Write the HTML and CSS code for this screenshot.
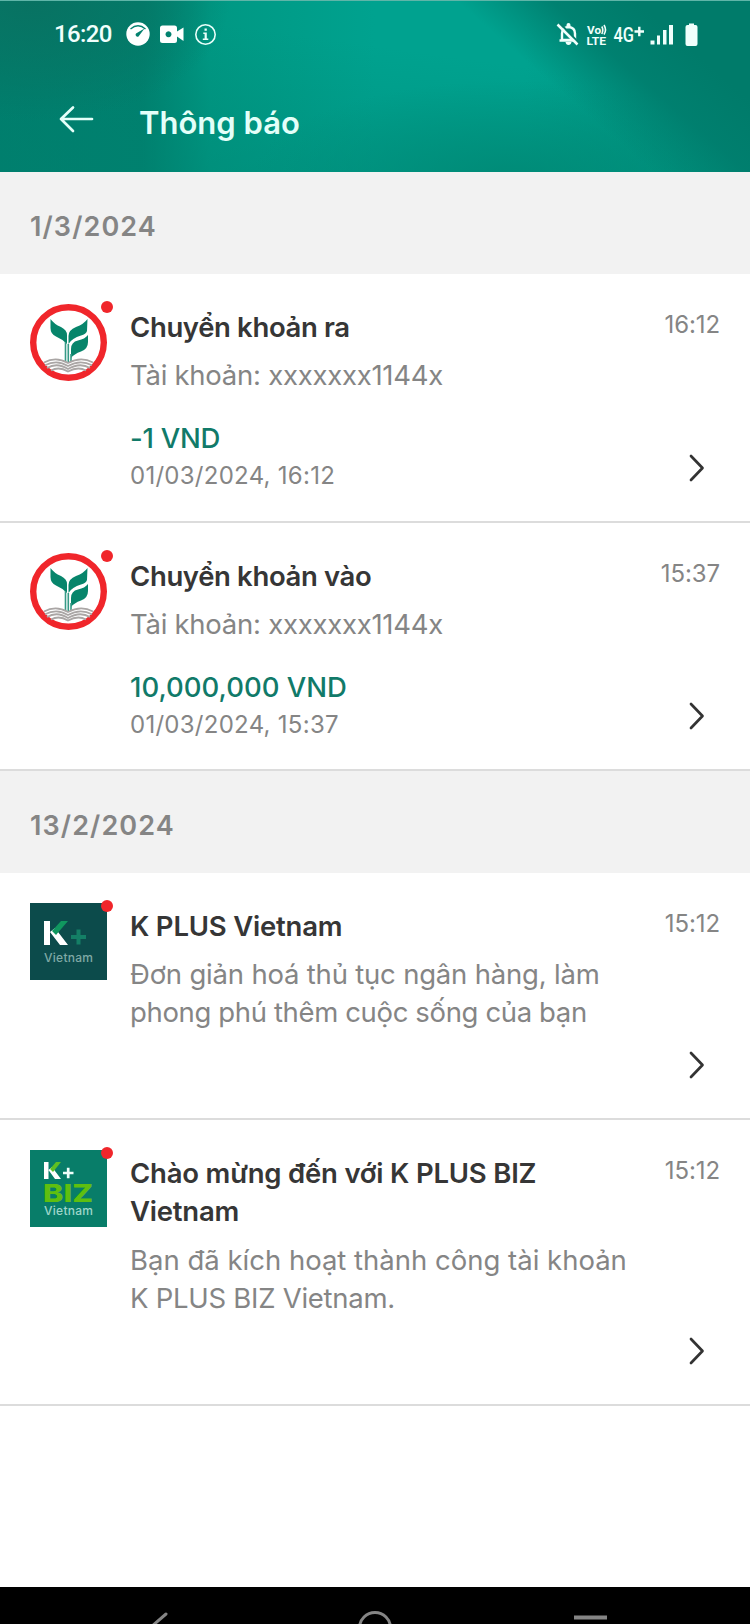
FILE: index.html
```html
<!DOCTYPE html>
<html lang="vi">
<head>
<meta charset="utf-8">
<title>Thông báo</title>
<link rel="stylesheet" href="styles.css">
</head>
<body>
<svg class="defs" width="0" height="0" aria-hidden="true">
  <symbol id="leaf" viewBox="0 0 77 77">
    <circle cx="38.500" cy="38.500" r="35.300" fill="#fff" stroke="#f0262b" stroke-width="6.400"/>
    <path d="M20.500 15Q24 20 31 23Q37 26 37 31V40Q32 35 26 32.500Q20.500 30 20.500 24Z" fill="#07856b"/>
    <path d="M57.500 15Q54 20 46 23Q38.500 26 38.500 32V40Q42 34 51 31.500Q56 30 57 27Z" fill="#07856b"/>
    <path d="M58 31Q55 35 48 36.500Q41 38 41 45V54Q44 50 51 47.500Q58 45 58 38Z" fill="#07856b"/>
    <path d="M35.500 38V58M38.300 40V58M41 50V57" fill="none" stroke="#369b87" stroke-width="1.600"/>
    <g fill="none" stroke="#aaa6a5" stroke-width="1.800">
      <path d="M14 58.500Q26 52 38 59Q51 52 63 58.500"/>
      <path d="M15 61.200Q27 55 38 62Q50 55 62 61.200"/>
      <path d="M17 64Q27 58 38 65Q50 58 60 64"/>
      <path d="M21 66.500Q29 62 38 67.500Q48 62 56 66.500"/>
    </g>
  </symbol>
  <symbol id="chevron" viewBox="0 0 18 30">
    <path d="M3 3 14.500 15 3 27" fill="none" stroke="#333" stroke-width="2.700" stroke-linecap="round" stroke-linejoin="round"/>
  </symbol>
</svg>
<header class="header">
  <div class="status">
    <span class="clock">16:20</span>
    <svg class="status-left" width="98" height="26" viewBox="0 0 98 26" fill="#fff">
      <circle cx="13" cy="13" r="11.700"/>
      <path d="M5.500 8Q13 1.500 20.500 8" fill="none" stroke="#04816f" stroke-width="1.300"/>
      <path d="M19.500 7.500 11 12.500a2 2 0 0 0 2.500 3Z" fill="#04816f"/>
      <path fill-rule="evenodd" d="M37.500 4.500H49.500Q52 4.500 52 7V10.500L58.500 6.500V20L52 15.500V19.500Q52 22 49.500 22H37.500Q35 22 35 19.500V7Q35 4.500 37.500 4.500ZM43.500 10.200a3 3 0 1 0 .01 0Z"/>
      <circle cx="80.500" cy="13.500" r="9.700" fill="none" stroke="#e8fffa" stroke-width="1.600"/>
      <path d="M79.500 7.500h2.300v2.200h-2.300zM78.300 11.500h3.500v6h1.500v1.400h-5.500v-1.400h1.800v-4.600h-1.300z" fill="#e8fffa"/>
    </svg>
    <svg class="status-right" width="144" height="28" viewBox="0 0 144 28" fill="#f0fffc">
      <path d="M7 20V13.500Q7 7.500 13.500 7Q20 7.500 20 13.500V20ZM4.500 20.500H22" fill="none" stroke="#f0fffc" stroke-width="2.400"/>
      <path d="M13.500 3a2 2 0 0 1 2 2v2h-4v-2a2 2 0 0 1 2-2M10.500 22h6q-.5 3-3 3t-3-3"/>
      <path d="M4.500 3 24 23" stroke="#057d6c" stroke-width="2"/>
      <path d="M2.500 4.500 22.500 24.500" stroke="#f0fffc" stroke-width="2.500"/>
      <text class="volte" x="32" y="14" textLength="14" lengthAdjust="spacingAndGlyphs">Vo</text>
      <path d="M46.800 6.500q2 3.500 0 7.500M49 5q3 5 0 9.500" fill="none" stroke="#f0fffc" stroke-width="1.600"/>
      <text class="volte" x="31.500" y="24.500" textLength="19.500" lengthAdjust="spacingAndGlyphs">LTE</text>
      <text class="network" x="58.500" y="22" textLength="20.500" lengthAdjust="spacingAndGlyphs">4G</text>
      <path d="M79.500 11.500h9.500M84.300 6.700v9.500" stroke="#f0fffc" stroke-width="2.400"/>
      <path d="M95.500 20.500h4v4h-4zM102 15.500h3v9h-3zM108 10h3.500v14.500H108zM114 5h4v19.500h-4z"/>
      <path d="M134 3.500h5v1.500h1.500q2 0 2 2V24q0 2-2 2h-8q-2 0-2-2V7q0-2 2-2h1.500z"/>
    </svg>
  </div>
  <div class="titlebar">
    <svg class="back" width="36" height="28" viewBox="0 0 36 28" fill="none" stroke="#e4fff9" stroke-width="2.700" stroke-linecap="round" stroke-linejoin="round"><path d="M33 14H2M14 2.500 2 14 14 26"/></svg>
    <h1 class="title">Thông báo</h1>
  </div>
</header>
<main class="feed">
  <h2 class="day">1/3/2024</h2>
  <article class="item item-first">
    <div class="avatar"><svg class="logo"><use href="#leaf"/></svg><i class="dot"></i></div>
    <div class="body">
      <h3 class="name tight">Chuyển khoản ra</h3>
      <p class="text snug">Tài khoản: xxxxxxx1144x</p>
      <p class="amount snug">-1 VND</p>
      <p class="stamp">01/03/2024, 16:12</p>
    </div>
    <div class="side"><time class="time">16:12</time><svg class="chevron"><use href="#chevron"/></svg></div>
  </article>
  <article class="item item-second">
    <div class="avatar"><svg class="logo"><use href="#leaf"/></svg><i class="dot"></i></div>
    <div class="body">
      <h3 class="name tight">Chuyển khoản vào</h3>
      <p class="text snug">Tài khoản: xxxxxxx1144x</p>
      <p class="amount">10,000,000 VND</p>
      <p class="stamp">01/03/2024, 15:37</p>
    </div>
    <div class="side"><time class="time">15:37</time><svg class="chevron"><use href="#chevron"/></svg></div>
  </article>
  <h2 class="day">13/2/2024</h2>
  <article class="item item-third">
    <div class="avatar">
      <svg class="logo" viewBox="0 0 77 77">
        <rect width="77" height="77" fill="#0c4b4b"/>
        <path d="M14 18h6v24h-6zM20 29 25 25 38 42H30Z" fill="#fff"/>
        <path d="M22 28 31 18H38L26 32Z" fill="#10975f"/>
        <path d="M41 34H56M48.500 26.500V41.500" stroke="#147f66" stroke-width="4"/>
        <text class="brand brand-dark" x="14" y="59" textLength="49">Vietnam</text>
      </svg><i class="dot"></i></div>
    <div class="body">
      <h3 class="name light">K PLUS Vietnam</h3>
      <p class="text"><span class="light">Đơn giản hoá thủ tục ngân hàng, làm</span><br><span class="tight">phong phú thêm cuộc sống của bạn</span></p>
    </div>
    <div class="side"><time class="time">15:12</time><svg class="chevron"><use href="#chevron"/></svg></div>
  </article>
  <article class="item item-fourth">
    <div class="avatar">
      <svg class="logo" viewBox="0 0 77 77">
        <rect width="77" height="77" fill="#087d69"/>
        <path d="M14 12h4.500v17h-4.500zM18.500 20 22 17 31 29H25Z" fill="#fff"/>
        <path d="M20 19 26 12H31L23 22Z" fill="#5fbf22"/>
        <path d="M33 23H43.500M38.200 17.700V28.300" stroke="#f0fffb" stroke-width="2.700"/>
        <text class="biz" x="13" y="51.500" textLength="50" lengthAdjust="spacingAndGlyphs">BIZ</text>
        <text class="brand brand-light" x="14" y="65" textLength="49">Vietnam</text>
      </svg><i class="dot"></i></div>
    <div class="body">
      <h3 class="name light">Chào mừng đến với K PLUS BIZ<br>Vietnam</h3>
      <p class="text">Bạn đã kích hoạt thành công tài khoản<br><span class="snug">K PLUS BIZ Vietnam.</span></p>
    </div>
    <div class="side"><time class="time">15:12</time><svg class="chevron"><use href="#chevron"/></svg></div>
  </article>
</main>
<nav class="navbar">
  <svg width="750" height="37" viewBox="0 0 750 37" fill="none" stroke="#858585" stroke-width="3">
    <path d="M166 27 151 40" stroke-linecap="round"/>
    <circle cx="375" cy="41" r="15.500"/>
    <path d="M574 30.500H607" stroke-width="4"/>
  </svg>
</nav>
</body>
</html>
```
FILE: styles.css
```css
* { box-sizing: border-box; }
body {
  margin: 0;
  width: 750px;
  height: 1624px;
  display: flex;
  flex-direction: column;
  overflow: hidden;
  background: #fff;
  font-family: Inter, "Noto Sans", sans-serif;
}
h1, h2, h3, p { margin: 0; }
.defs { position: absolute; }

.header {
  height: 172px;
  flex: none;
  border-top: 1px solid #5fb5a8;
  background:
    linear-gradient(41deg, transparent 69%, rgba(0, 124, 108, .85) 79%, #007b6a 88%),
    radial-gradient(ellipse 260px 100px at 68% 105%, rgba(0, 135, 115, .8), transparent),
    radial-gradient(ellipse 200px 120px at 4% 0, #087262, rgba(6, 118, 101, .6) 60%, transparent),
    linear-gradient(8deg, rgba(0, 130, 112, .45), transparent 65%),
    linear-gradient(90deg, #007d6c, #00806e 19%, #009883 28%, #00a28f 50%, #00a28f 70%, #00907c);
}
.status { display: flex; align-items: center; height: 65px; padding: 0 51px 0 54px; }
.clock { width: 71px; font: 500 24px/28px Roboto, sans-serif; letter-spacing: -0.6px; color: #f1fffc; }
.status-right { margin-left: auto; }
.volte { font: 700 11px Roboto, sans-serif; }
.network { font: 500 20px Roboto, sans-serif; }
.titlebar { display: flex; align-items: center; height: 106px; padding: 0 0 0 59px; gap: 44px; }
.title { padding-top: 7px; font-size: 31px; line-height: 40px; font-weight: 600; color: #e4fff9; white-space: nowrap; }

.feed { flex: 1; }
.day {
  display: flex;
  align-items: center;
  height: 102px;
  padding: 6px 30px 0;
  background: #f2f2f2;
  color: #858585;
  font-size: 27px;
  font-weight: 600;
  letter-spacing: 1.1px;
}
.item {
  display: flex;
  padding: 30px 30px 0;
  border-bottom: 2px solid #dcdcdc;
}
.item-first { height: 249px; }
.item-second { height: 248px; }
.item-third { height: 247px; }
.item-fourth { height: 286px; }
.avatar { position: relative; width: 77px; height: 77px; flex: none; }
.logo { display: block; width: 77px; height: 77px; }
.dot {
  position: absolute;
  top: -3px;
  right: -6px;
  width: 12px;
  height: 12px;
  border-radius: 50%;
  background: #f0262b;
}
.body { width: 520px; margin-left: 23px; padding-top: 4px; white-space: nowrap; }
.name { font-size: 27.500px; line-height: 38px; font-weight: 600; color: #363636; }
.text { margin-top: 10px; font-size: 27.500px; line-height: 38px; color: #858585; }
.item-fourth .text { margin-top: 11px; }
.amount { margin-top: 25px; font-size: 27.500px; line-height: 38px; font-weight: 500; color: #117a69; }
.stamp { font-size: 24px; line-height: 37px; letter-spacing: .27px; color: #858585; }
.light { letter-spacing: -.2px; }
.snug { letter-spacing: -.26px; }
.tight { letter-spacing: -.36px; }
.side { flex: 1; display: flex; flex-direction: column; align-items: flex-end; justify-content: space-between; padding: 6px 0 38px; }
.time { font-size: 24px; line-height: 30px; letter-spacing: -.1px; color: #858585; }
.chevron { display: block; width: 18px; height: 30px; margin-right: 14px; }
.brand { font: 500 12px/1 Inter, sans-serif; }
.brand-dark { fill: #7fa9a5; }
.brand-light { fill: #9ed6c9; }
.biz { font: 800 25px/1 Inter, sans-serif; fill: #5fbf10; }

.navbar { height: 37px; flex: none; background: #000; }
.navbar svg { display: block; }
```
